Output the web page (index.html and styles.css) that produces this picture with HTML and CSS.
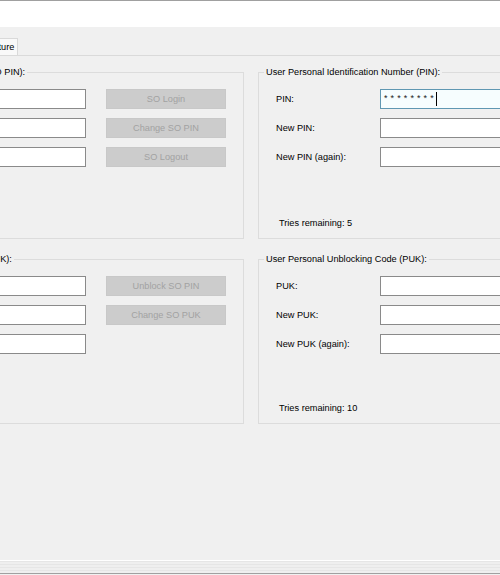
FILE: index.html
```html
<!DOCTYPE html>
<html lang="en">
<head>
<meta charset="utf-8">
<title>PIN management</title>
<link rel="stylesheet" href="styles.css">
</head>
<body>
<div class="titlebar"></div>
<div class="tabstrip">
  <div class="tab">Signature</div>
</div>
<div class="tabpage">
  <div class="groups">
    <fieldset class="group group-top">
      <legend>Security Officer Personal Identification Number (SO PIN):</legend>
      <div class="inner">
        <div class="rows">
          <span class="label">SO PIN:</span><span class="textbox"></span><span class="btn">SO Login</span>
          <span class="label">New SO PIN:</span><span class="textbox"></span><span class="btn">Change SO PIN</span>
          <span class="label">New SO PIN (again):</span><span class="textbox"></span><span class="btn">SO Logout</span>
        </div>
      </div>
    </fieldset>
    <fieldset class="group group-top">
      <legend>User Personal Identification Number (PIN):</legend>
      <div class="inner">
        <div class="rows">
          <span class="label">PIN:</span><span class="textbox focused"><span class="mask">********</span><span class="caret"></span></span><span></span>
          <span class="label">New PIN:</span><span class="textbox"></span><span></span>
          <span class="label">New PIN (again):</span><span class="textbox"></span><span></span>
        </div>
        <div class="tries">Tries remaining: 5</div>
      </div>
    </fieldset>
    <fieldset class="group group-bottom">
      <legend>Security Officer Personal Unblocking Code (SO PUK):</legend>
      <div class="inner">
        <div class="rows">
          <span class="label">SO PUK:</span><span class="textbox"></span><span class="btn">Unblock SO PIN</span>
          <span class="label">New SO PUK:</span><span class="textbox"></span><span class="btn">Change SO PUK</span>
          <span class="label">New SO PUK (again):</span><span class="textbox"></span><span></span>
        </div>
      </div>
    </fieldset>
    <fieldset class="group group-bottom">
      <legend>User Personal Unblocking Code (PUK):</legend>
      <div class="inner">
        <div class="rows">
          <span class="label">PUK:</span><span class="textbox"></span><span></span>
          <span class="label">New PUK:</span><span class="textbox"></span><span></span>
          <span class="label">New PUK (again):</span><span class="textbox"></span><span></span>
        </div>
        <div class="tries">Tries remaining: 10</div>
      </div>
    </fieldset>
  </div>
</div>
<div class="statusbar"></div>
</body>
</html>
```

FILE: styles.css
```css
html, body {
  margin: 0;
  padding: 0;
}
body {
  width: 500px;
  height: 575px;
  overflow: hidden;
  background: #f0f0f0;
  font-family: "Liberation Sans", Arial, sans-serif;
  font-size: 9.2px;
  color: #000;
}
.titlebar {
  height: 26px;
  background: #ffffff;
  border-top: 1px solid #a0a0a0;
}
.tabstrip {
  height: 28px;
  display: flex;
  align-items: flex-end;
}
.tab {
  height: 16px;
  line-height: 16px;
  margin-left: -31px;
  padding: 0 3px 0 6px;
  background: #f9f9f9;
  border-top: 1px solid #d9d9d9;
  border-right: 1px solid #d9d9d9;
  white-space: nowrap;
}
.tabpage {
  height: 505px;
  box-sizing: border-box;
  border-top: 1px solid #dadada;
  padding-top: 10px;
  overflow: hidden;
}
.groups {
  display: grid;
  grid-template-columns: 460px 460px;
  column-gap: 14px;
  row-gap: 14px;
  margin-left: -216px;
}
.group {
  margin: 0;
  padding: 0;
  min-width: 0;
  border: 1px solid #dcdcdc;
}
.group legend {
  margin-left: 5px;
  padding: 0 2px;
  line-height: 12px;
  height: 12px;
  white-space: nowrap;
}
.inner {
  box-sizing: border-box;
  padding: 11px 17px 9px 17px;
  display: flex;
  flex-direction: column;
}
.group-top .inner {
  height: 160px;
}
.group-bottom .inner {
  height: 158px;
}
.rows {
  display: grid;
  grid-template-columns: 104px 180px 140px;
  grid-auto-rows: 20px;
  row-gap: 9px;
  align-items: center;
}
.label {
  white-space: nowrap;
}
.textbox {
  box-sizing: border-box;
  height: 20px;
  background: #ffffff;
  border: 1px solid #8a8a8a;
  display: flex;
  align-items: center;
  padding-left: 3px;
}
.textbox.focused {
  border-color: #5f97b2;
  background: #f6fdfe;
}
.mask {
  letter-spacing: 3.1px;
  font-size: 9px;
  color: #222;
  position: relative;
  top: -1px;
}
.caret {
  width: 0;
  height: 14px;
  border-left: 1px solid #000;
  margin-left: -1px;
}
.btn {
  justify-self: end;
  box-sizing: border-box;
  width: 120px;
  height: 20px;
  background: #cccccc;
  border: 1px solid #c8c8c8;
  color: #a2a2a2;
  display: flex;
  align-items: center;
  justify-content: center;
  white-space: nowrap;
}
.tries {
  margin-top: auto;
  margin-left: 3px;
  line-height: 12px;
}
.statusbar {
  height: 12px;
  border-top: 1px solid #ffffff;
  border-bottom: 1px solid #a0a0a0;
  background: repeating-linear-gradient(to bottom, #e6e6e6 0, #e6e6e6 1px, #efefef 1px, #efefef 3px);
}
```
